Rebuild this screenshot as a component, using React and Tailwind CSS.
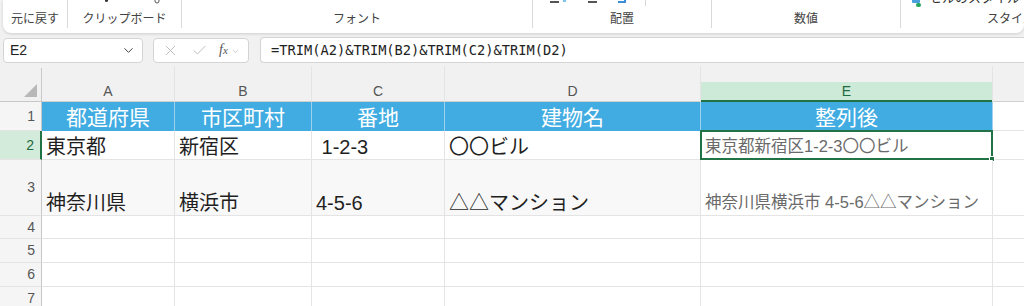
import { X, Check, ChevronDown } from 'lucide-react';

const colW = ['w-[133px]', 'w-[137px]', 'w-[133px]', 'w-[256px]', 'w-[292px]', 'flex-1'];
const letters = ['A', 'B', 'C', 'D', 'E', ''];

const headers = ['都道府県', '市区町村', '番地', '建物名', '整列後'];
const data = [
  { n: 2, h: 'h-[29px]', cells: ['東京都', '新宿区', ' 1-2-3', '〇〇ビル'], result: '東京都新宿区1-2-3〇〇ビル' },
  { n: 3, h: 'h-[56px]', cells: ['神奈川県', '横浜市', '4-5-6', '△△マンション'], result: '神奈川県横浜市 4-5-6△△マンション' },
];
const emptyRows = [
  { n: 4, h: 'h-[23px]' },
  { n: 5, h: 'h-[24px]' },
  { n: 6, h: 'h-[24px]' },
  { n: 7, h: 'h-[24px]' },
];

const Sep = () => <div className="w-px h-[28px] bg-[#d9d9d9] shrink-0" />;

const Group = ({ w, label, children }) => (
  <div className={`${w} h-full shrink-0 flex flex-col`}>
    <div className="h-[9px] relative overflow-hidden">{children}</div>
    <div className="flex-1 flex items-center justify-center pb-[5px] text-[12px] text-[#424242] whitespace-nowrap">{label}</div>
  </div>
);

const Ribbon = () => (
  <div className="h-[33px] ml-[3px] bg-white rounded-b-[8px] shadow-[0_1px_3px_rgba(0,0,0,0.15)] flex overflow-hidden">
    <Group w="w-[64px]" label="元に戻す" />
    <Sep />
    <Group w="w-[113px]" label="クリップボード">
      <div className="flex">
        <div className="ml-[37px] mt-[-2px] w-[3px] h-[4px] rounded-full bg-[#333]" />
        <svg className="ml-[44px] mt-[-4px]" width="10" height="10" viewBox="0 0 10 10">
          <path d="M3 0v5M7 0v5M3 5a2 2 0 0 0 4 0" stroke="#555" strokeWidth="1" fill="none" />
        </svg>
      </div>
    </Group>
    <Sep />
    <Group w="w-[350px]" label="フォント" />
    <Sep />
    <div className="w-[178px] h-full shrink-0 flex flex-col">
      <div className="h-[9px] flex items-start">
        <div className="ml-[17px] mt-[1px] w-[9px] h-[1.5px] bg-[#555]" />
        <div className="ml-[4px] mt-0 w-[3px] h-[2px] bg-[#7cc2ee]" />
        <div className="ml-[22px] mt-[1px] w-[9px] h-[1.5px] bg-[#555]" />
        <div className="ml-[21px] mt-[-1px] w-[8px] h-[4px] border-b-2 border-r-2 border-[#3b8fd8]" />
        <div className="ml-[19px] w-px h-[6px] bg-[#d9d9d9]" />
      </div>
      <div className="flex-1 flex items-center justify-center pb-[5px] text-[12px] text-[#424242]">配置</div>
    </div>
    <Sep />
    <Group w="w-[188px]" label="数値" />
    <Sep />
    <div className="w-[220px] h-full shrink-0 flex flex-col">
      <div className="h-[9px] flex items-end overflow-hidden">
        <div className="ml-[11px] mb-[3px] w-[11px] h-[7px]">
          <div className="w-[8px] h-[4px] bg-[#4aa0dc] rounded-[1px]" />
          <div className="ml-[4px] w-[5px] h-[4px] rounded-full bg-[#23a55a]" />
        </div>
        <div className="ml-[6px] mb-[3px] text-[13px] leading-[16px] text-[#333] whitespace-nowrap">セルのスタイル</div>
      </div>
      <div className="flex-1 flex items-center justify-center pb-[5px] text-[12px] text-[#424242] whitespace-nowrap">スタイル</div>
    </div>
  </div>
);

const FormulaBar = () => (
  <div className="h-[33px] flex items-center pt-[1px]">
    <div className="ml-[3px] w-[140px] h-[25px] bg-white border border-[#d4d4d4] rounded-[4px] flex items-center justify-between pl-[6px] pr-[6px]">
      <span className="text-[14px] text-[#222]">E2</span>
      <ChevronDown size={15} strokeWidth={1.6} className="text-[#444]" />
    </div>
    <div className="ml-[10px] w-[96px] h-[25px] bg-white border border-[#d4d4d4] rounded-[4px] flex items-center pl-[8px]">
      <X size={17} strokeWidth={1.2} className="text-[#b3b3b3]" />
      <Check size={17} strokeWidth={1.2} className="ml-[12px] text-[#b3b3b3]" />
      <span className="ml-[11px] font-['Liberation_Serif',serif] italic text-[14px] text-[#555] leading-none">f<span className="text-[11px]">x</span></span>
      <ChevronDown size={9} strokeWidth={1.5} className="ml-[3px] mt-[2px] text-[#aaa]" />
    </div>
    <div className="ml-[11px] flex-1 h-[26px] bg-white border border-r-0 border-[#d4d4d4] rounded-l-[4px] flex items-center pl-[10px]">
      <span className="font-['DejaVu_Sans_Mono',monospace] text-[13.7px] text-[#222]">=TRIM(A2)&amp;TRIM(B2)&amp;TRIM(C2)&amp;TRIM(D2)</span>
    </div>
  </div>
);

const ColumnHeader = () => (
  <div className="flex h-[36px]">
    <div className="w-[42px] shrink-0 flex flex-col">
      <div className="h-[2px]" />
      <div className="flex-1 border-r border-b border-[#c8c8c8] flex items-end justify-end pr-[4px] pb-[4px]">
        <svg width="13" height="13" viewBox="0 0 13 13">
          <path d="M13 0V13H0Z" fill="#b8b8b8" />
        </svg>
      </div>
    </div>
    {letters.map((l, i) => (
      <div key={i} className={`${colW[i]} shrink-0 flex flex-col border-b border-[#d0d0d0] ${i < 5 ? 'border-r border-r-[#e4e4e4]' : ''}`}>
        <div className="flex-1" />
        {l === 'E' ? (
          <div className="h-[20px] bg-[#cde9d7] border-b-2 border-[#217346] flex items-center justify-center text-[14px] text-[#1e6b3d] -mb-px">{l}</div>
        ) : (
          <div className="h-[20px] flex items-center justify-center text-[14px] text-[#555]">{l}</div>
        )}
      </div>
    ))}
  </div>
);

const RowNum = ({ n, h, active }) => (
  <div className={`w-[42px] ${h} shrink-0 flex items-center justify-end pr-[6px] text-[14px] border-b border-b-[#e4e4e4] ${active ? 'bg-[#d2ebdb] text-[#1e6b3d] border-r-2 border-r-[#217346] pr-[5px]' : 'bg-[#f5f5f5] text-[#555] border-r border-r-[#c8c8c8]'}`}>
    {n}
  </div>
);

export default function App() {
  return (
    <div className="w-[1024px] h-[306px] overflow-hidden bg-[#f1f1f1] font-['Liberation_Sans','Noto_Sans_CJK_JP',sans-serif]">
      <Ribbon />
      <FormulaBar />
      <ColumnHeader />

      {/* row 1: blue header */}
      <div className="flex h-[29px]">
        <RowNum n={1} h="h-[29px]" />
        {headers.map((t, i) => (
          <div key={i} className={`${colW[i]} shrink-0 bg-[#41ace1] border-r border-[#9fd1ee] flex items-center justify-center text-white text-[21px] font-['Noto_Sans_CJK_JP',sans-serif]`}>
            {t}
          </div>
        ))}
        <div className="flex-1 bg-white border-b border-[#e4e4e4]" />
      </div>

      {data.map((r) => (
        <div key={r.n} className={`flex ${r.h}`}>
          <RowNum n={r.n} h={r.h} active={r.n === 2} />
          {r.cells.map((t, i) => (
            <div key={i} className={`${colW[i]} shrink-0 ${r.n === 3 ? 'bg-[#f8f8f8]' : 'bg-white'} border-r border-b border-[#e4e4e4] flex items-end pl-[4px] pb-0 text-[20px] leading-[24px] text-[#1f1f1f] whitespace-pre`}>
              {t}
            </div>
          ))}
          <div className="w-[292px] shrink-0 bg-white border-r border-b border-[#e4e4e4] flex items-end pl-[4px] pb-[2px] text-[16.5px] leading-[22px] text-[#6a6a6a] whitespace-pre relative">
            {r.result}
            {r.n === 2 && (
              <div className="absolute -left-px -top-px -right-px -bottom-px border-2 border-[#217346]">
                <div className="absolute -right-[4px] -bottom-[4px] w-[6px] h-[6px] bg-[#217346] border border-white" />
              </div>
            )}
          </div>
          <div className="flex-1 bg-white border-b border-[#e4e4e4]" />
        </div>
      ))}

      {emptyRows.map((r) => (
        <div key={r.n} className={`flex ${r.h}`}>
          <RowNum n={r.n} h={r.h} />
          {colW.map((w, i) => (
            <div key={i} className={`${w} shrink-0 bg-white border-b border-[#e4e4e4] ${i < 5 ? 'border-r' : ''}`} />
          ))}
        </div>
      ))}
    </div>
  );
}
